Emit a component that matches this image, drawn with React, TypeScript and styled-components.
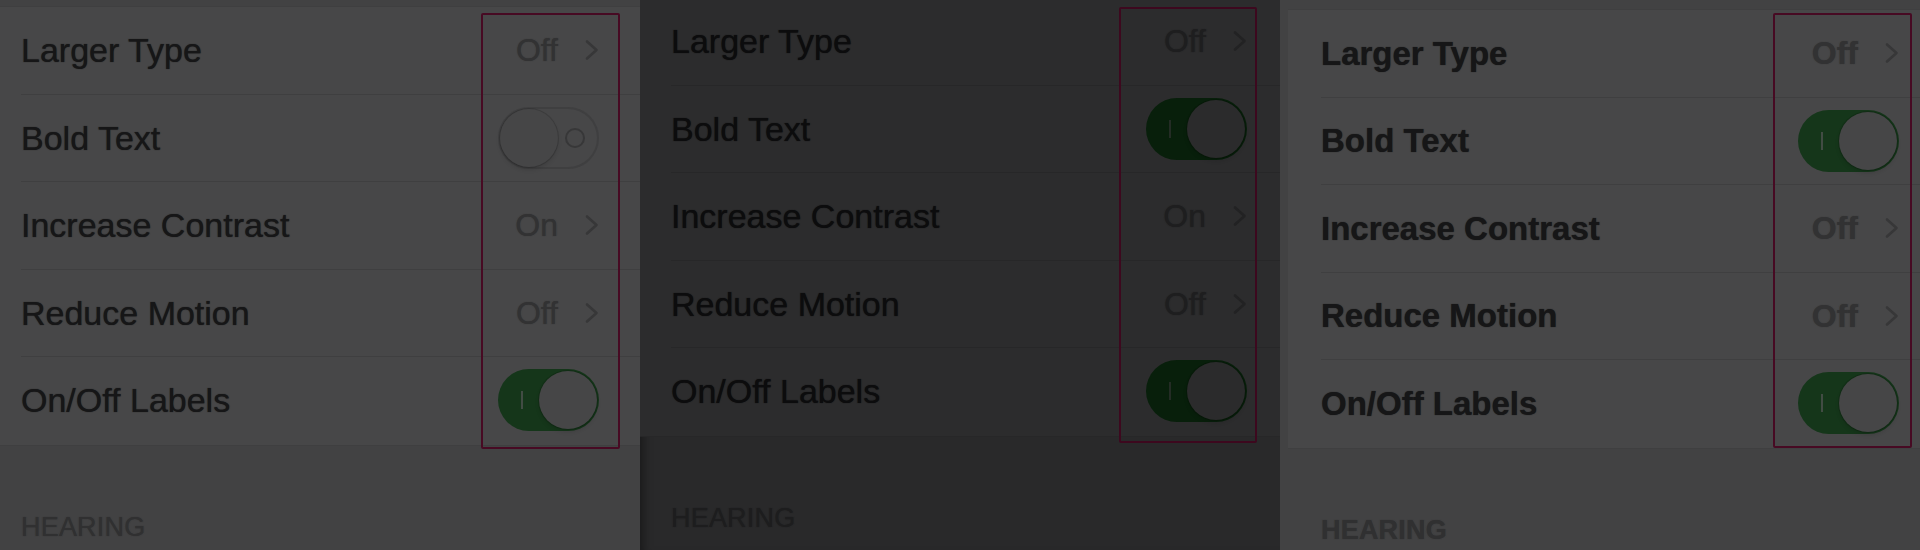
import React from "react";
import styled, { createGlobalStyle, css } from "styled-components";

const GlobalStyle = createGlobalStyle`
  html, body {
    margin: 0;
    padding: 0;
    background: #282829;
  }
  body {
    font-family: "Liberation Sans", Helvetica, Arial, sans-serif;
    -webkit-font-smoothing: antialiased;
  }
`;

type Tone = {
  page: string;
  group: string;
  line: string;
  label: string;
  value: string;
  chevron: string;
  header: string;
  green: string;
  knob: string;
  mark: string;
  frame: string;
};

const lightTone: Tone = {
  page: "#424243",
  group: "#474748",
  line: "#3f3f40",
  label: "#161617",
  value: "#323233",
  chevron: "#373738",
  header: "#303031",
  green: "#15361a",
  knob: "#464647",
  mark: "#424c44",
  frame: "#470a23",
};

const darkTone: Tone = {
  page: "#29292a",
  group: "#2c2c2d",
  line: "#272728",
  label: "#0c0c0d",
  value: "#1e1e1f",
  chevron: "#222223",
  header: "#1d1d1e",
  green: "#081f0b",
  knob: "#2b2b2c",
  mark: "#242c25",
  frame: "#3d081e",
};

type Item =
  | { label: string; kind: "link"; value: string }
  | { label: string; kind: "switch"; on: boolean };

type PanelSpec = {
  tone: Tone;
  bold: boolean;
  edge: number;
  top: number;
  inset: number;
  trail: number;
  frame: { left: number; top: number; width: number; height: number };
  items: Item[];
};

const Page = styled.div`
  display: flex;
  width: 1920px;
  height: 550px;
  overflow: hidden;
`;

const Panel = styled.section<{ $tone: Tone; $edge: number; $shade?: boolean }>`
  position: relative;
  flex: 0 0 640px;
  height: 550px;
  overflow: hidden;
  box-sizing: border-box;
  padding-left: ${(p) => p.$edge}px;
  background: ${(p) => p.$tone.page};
  ${(p) =>
    p.$shade &&
    css`
      box-shadow: inset 10px 0 8px -6px rgba(0, 0, 0, 0.35);
    `}
`;

const Group = styled.div<{ $tone: Tone; $top: number }>`
  margin-top: ${(p) => p.$top}px;
  background: ${(p) => p.$tone.group};
  border-top: 1px solid ${(p) => p.$tone.line};
  border-bottom: 1px solid ${(p) => p.$tone.line};
`;

const Row = styled.div<{ $inset: number }>`
  display: flex;
  height: 87.5px;
  padding-left: ${(p) => p.$inset}px;

  &:last-child > div {
    border-bottom-color: transparent;
  }
`;

const RowBody = styled.div<{ $tone: Tone; $trail: number }>`
  flex: 1;
  display: flex;
  align-items: center;
  justify-content: space-between;
  box-sizing: border-box;
  padding-right: ${(p) => p.$trail}px;
  border-bottom: 1px solid ${(p) => p.$tone.line};
`;

const Label = styled.span<{ $tone: Tone; $bold: boolean }>`
  font-size: ${(p) => (p.$bold ? 33 : 34)}px;
  line-height: 1;
  font-weight: ${(p) => (p.$bold ? 700 : 400)};
  color: ${(p) => p.$tone.label};
  text-shadow: 0 0 1px ${(p) => p.$tone.label};
`;

const Detail = styled.span`
  display: flex;
  align-items: center;
  gap: 27px;
`;

const Value = styled.span<{ $tone: Tone; $bold: boolean }>`
  font-size: 32px;
  line-height: 1;
  font-weight: ${(p) => (p.$bold ? 700 : 400)};
  color: ${(p) => p.$tone.value};
  text-shadow: 0 0 1px ${(p) => p.$tone.value};
`;

const Track = styled.span<{ $tone: Tone; $on: boolean }>`
  position: relative;
  display: flex;
  align-items: center;
  justify-content: ${(p) => (p.$on ? "flex-end" : "flex-start")};
  width: 101px;
  height: 62px;
  box-sizing: border-box;
  padding: 2px;
  border-radius: 31px;
  background: ${(p) => (p.$on ? p.$tone.green : p.$tone.group)};
  box-shadow: ${(p) => (p.$on ? "none" : `inset 0 0 0 2px ${p.$tone.line}`)};
`;

const Knob = styled.span<{ $tone: Tone }>`
  width: 58px;
  height: 58px;
  border-radius: 50%;
  background: ${(p) => p.$tone.knob};
  box-shadow: 0 0 0 1px rgba(0, 0, 0, 0.14), 0 3px 4px rgba(0, 0, 0, 0.12);
`;

// the "I" and "O" marks drawn inside the switch track
const OnMark = styled.span<{ $tone: Tone }>`
  position: absolute;
  left: 23px;
  top: 22px;
  width: 2px;
  height: 18px;
  background: ${(p) => p.$tone.mark};
`;

const OffMark = styled.span<{ $tone: Tone }>`
  position: absolute;
  right: 14px;
  top: 21px;
  width: 16px;
  height: 16px;
  border-radius: 50%;
  border: 2px solid ${(p) => p.$tone.chevron};
`;

const Header = styled.div<{ $tone: Tone; $bold: boolean; $inset: number }>`
  margin-top: 68px;
  padding-left: ${(p) => p.$inset}px;
  font-size: 27px;
  line-height: 27px;
  font-weight: ${(p) => (p.$bold ? 700 : 400)};
  color: ${(p) => p.$tone.header};
  letter-spacing: 0.2px;
  text-shadow: 0 0 1px ${(p) => p.$tone.header};
`;

// highlight box drawn over the accessory column
const Frame = styled.div<{ $tone: Tone }>`
  position: absolute;
  box-sizing: border-box;
  border: 2px solid ${(p) => p.$tone.frame};
  border-radius: 2px;
  pointer-events: none;
`;

function Chevron({ tone }: { tone: Tone }) {
  return (
    <svg width="14" height="22" viewBox="0 0 14 22" fill="none">
      <polyline
        points="2,2.5 11.5,11 2,19.5"
        stroke={tone.chevron}
        strokeWidth="2.6"
        strokeLinecap="round"
        strokeLinejoin="round"
      />
    </svg>
  );
}

function Switch({ tone, on }: { tone: Tone; on: boolean }) {
  return (
    <Track $tone={tone} $on={on}>
      {on ? <OnMark $tone={tone} /> : <OffMark $tone={tone} />}
      <Knob $tone={tone} />
    </Track>
  );
}

function SettingsPanel({ spec, shade }: { spec: PanelSpec; shade?: boolean }) {
  const { tone, bold } = spec;
  return (
    <Panel $tone={tone} $edge={spec.edge} $shade={shade}>
      <Group $tone={tone} $top={spec.top}>
        {spec.items.map((item) => (
          <Row key={item.label} $inset={spec.inset}>
            <RowBody $tone={tone} $trail={spec.trail}>
              <Label $tone={tone} $bold={bold}>
                {item.label}
              </Label>
              {item.kind === "link" ? (
                <Detail>
                  <Value $tone={tone} $bold={bold}>
                    {item.value}
                  </Value>
                  <Chevron tone={tone} />
                </Detail>
              ) : (
                <Switch tone={tone} on={item.on} />
              )}
            </RowBody>
          </Row>
        ))}
      </Group>
      <Header $tone={tone} $bold={bold} $inset={spec.inset}>
        HEARING
      </Header>
      <Frame $tone={tone} style={{ ...spec.frame }} />
    </Panel>
  );
}

const rows = (bold: boolean, contrast: string): Item[] => [
  { label: "Larger Type", kind: "link", value: "Off" },
  { label: "Bold Text", kind: "switch", on: bold },
  { label: "Increase Contrast", kind: "link", value: contrast },
  { label: "Reduce Motion", kind: "link", value: "Off" },
  { label: "On/Off Labels", kind: "switch", on: true },
];

const panels: PanelSpec[] = [
  {
    tone: lightTone,
    bold: false,
    edge: 0,
    top: 6,
    inset: 21,
    trail: 41,
    frame: { left: 481, top: 13, width: 139, height: 436 },
    items: rows(false, "On"),
  },
  {
    tone: darkTone,
    bold: false,
    edge: 0,
    top: -3,
    inset: 31,
    trail: 33,
    frame: { left: 479, top: 7, width: 138, height: 436 },
    items: rows(true, "On"),
  },
  {
    tone: lightTone,
    bold: true,
    edge: 8,
    top: 9,
    inset: 33,
    trail: 21,
    frame: { left: 493, top: 13, width: 139, height: 435 },
    items: rows(true, "Off"),
  },
];

export default function App() {
  return (
    <>
      <GlobalStyle />
      <Page>
        {panels.map((spec, i) => (
          <SettingsPanel key={i} spec={spec} shade={i === 1} />
        ))}
      </Page>
    </>
  );
}
